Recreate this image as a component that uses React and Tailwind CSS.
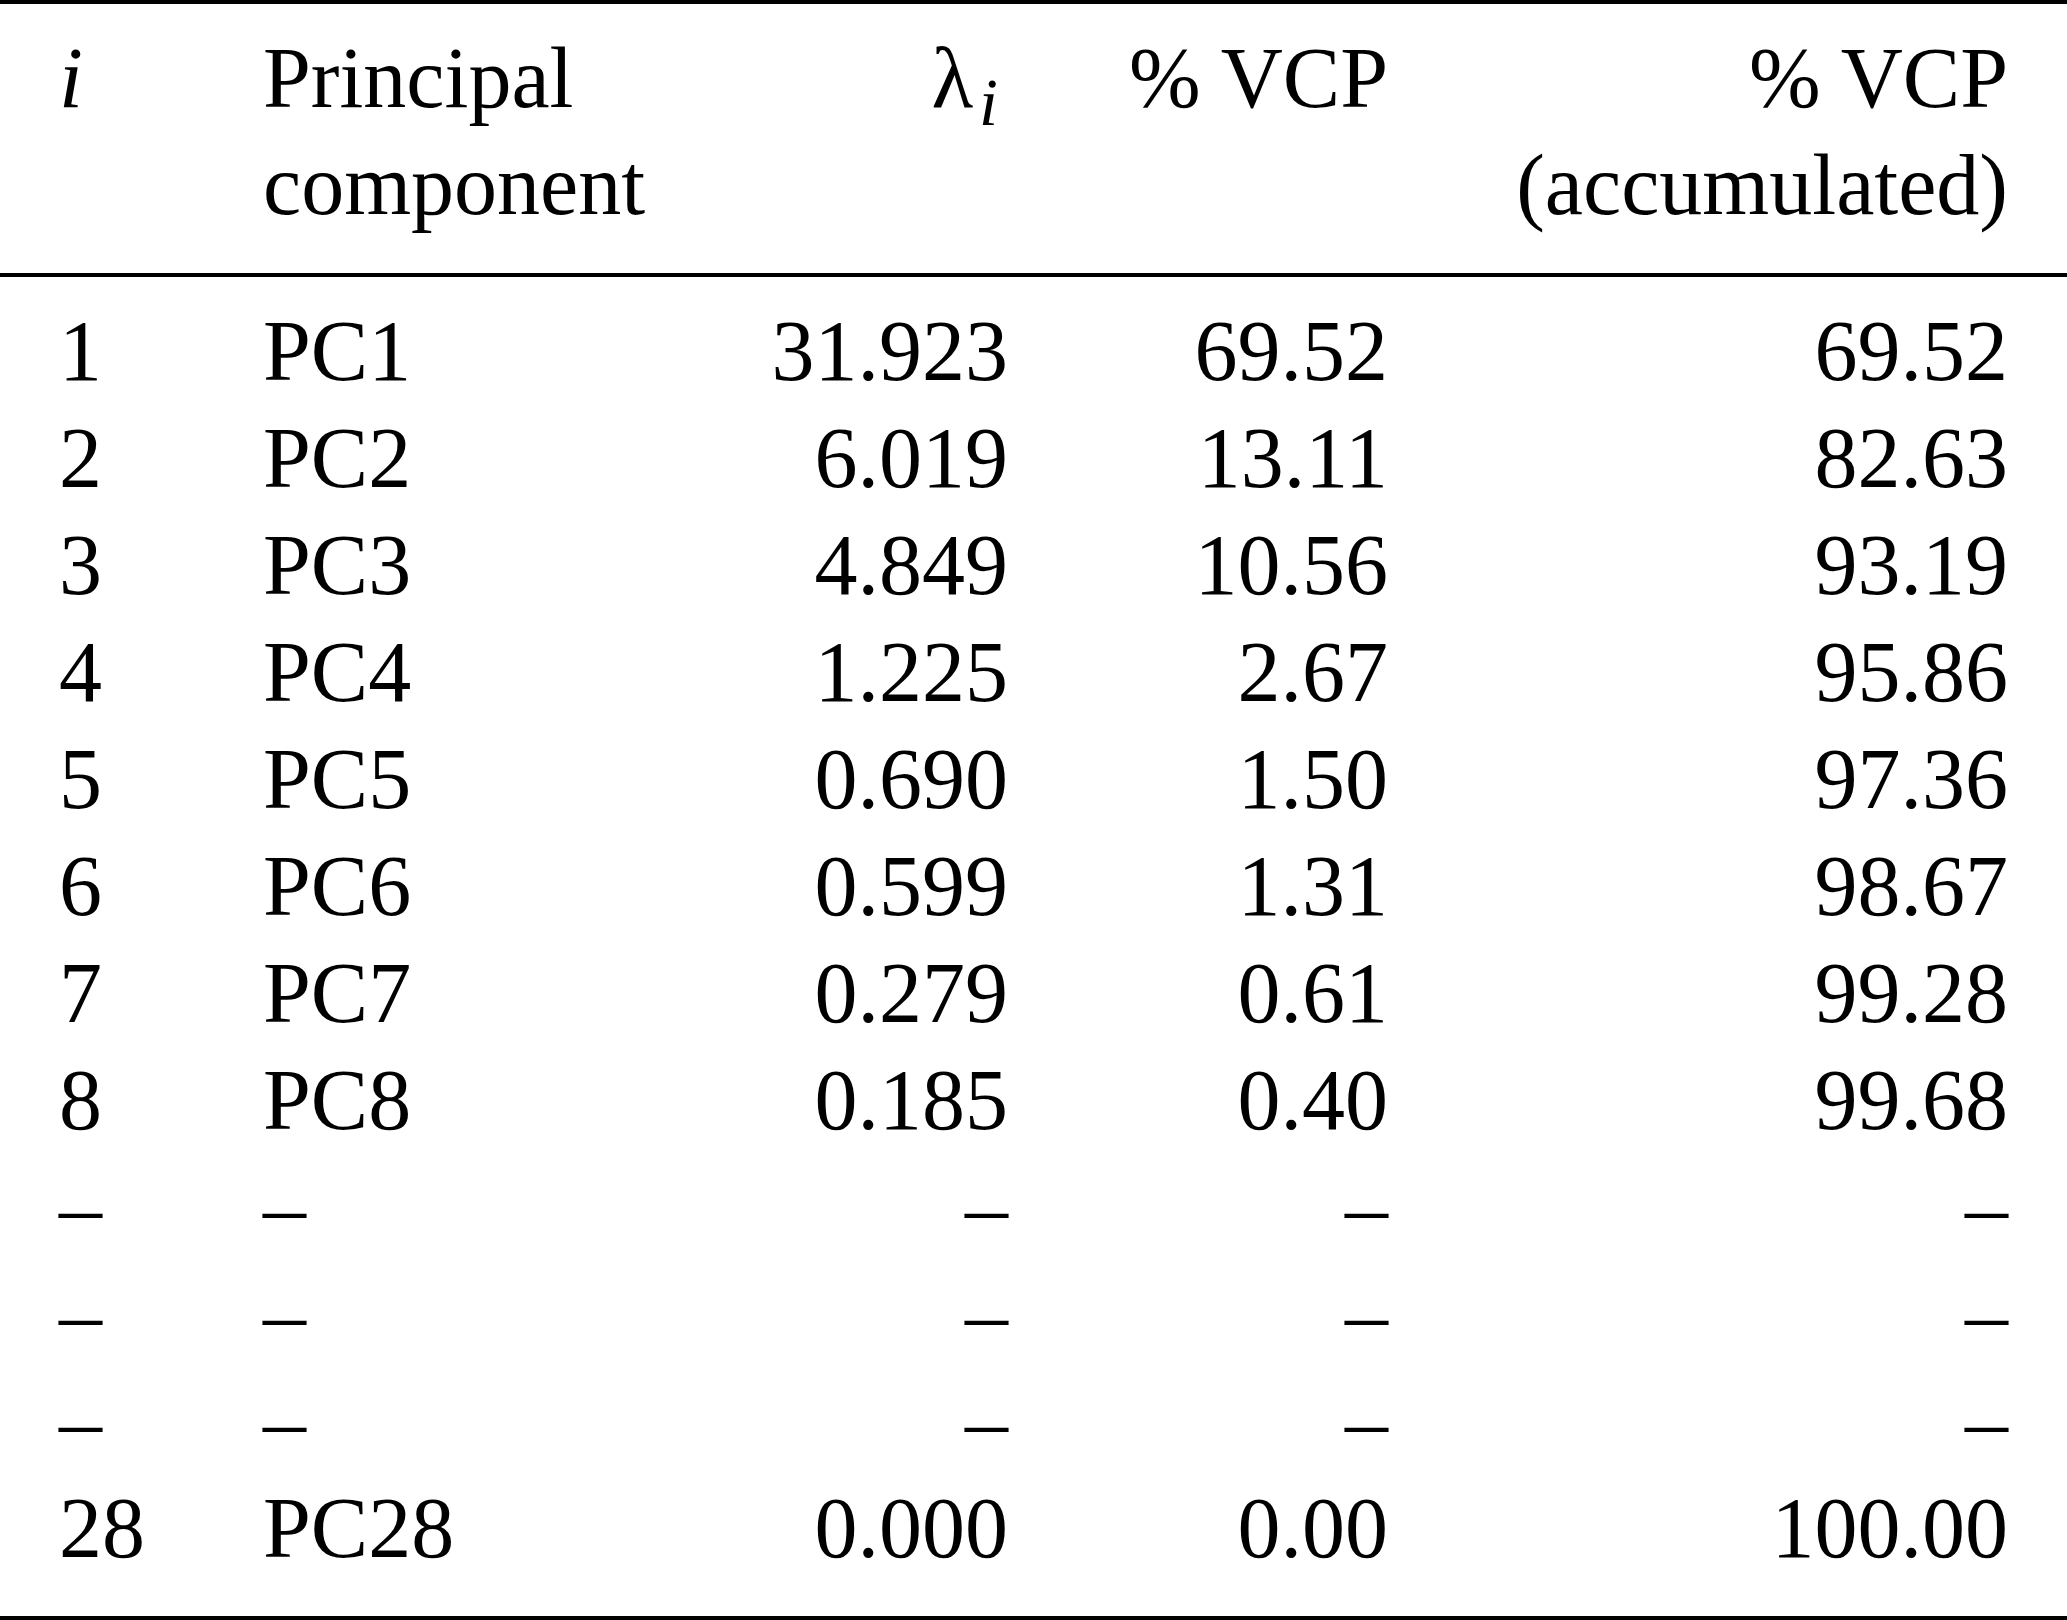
const rows = [
  ["1", "PC1", "31.923", "69.52", "69.52"],
  ["2", "PC2", "6.019", "13.11", "82.63"],
  ["3", "PC3", "4.849", "10.56", "93.19"],
  ["4", "PC4", "1.225", "2.67", "95.86"],
  ["5", "PC5", "0.690", "1.50", "97.36"],
  ["6", "PC6", "0.599", "1.31", "98.67"],
  ["7", "PC7", "0.279", "0.61", "99.28"],
  ["8", "PC8", "0.185", "0.40", "99.68"],
  ["–", "–", "–", "–", "–"],
  ["–", "–", "–", "–", "–"],
  ["–", "–", "–", "–", "–"],
  ["28", "PC28", "0.000", "0.00", "100.00"],
];

const cols = "grid grid-cols-[204px_350px_395px_380px_620px] pl-[59px] pr-[59px]";

export default function App() {
  return (
    <div className="w-[2067px] h-[1620px] bg-white text-black font-['Liberation_Serif','Times_New_Roman',serif] text-[86px] leading-[107px]">
      <div className="h-[4px] bg-black" />

      {/* header */}
      <div className={`${cols} pt-[20.5px] pb-[34.5px]`}>
        <div className="italic">i</div>
        <div>
          <div>Principal</div>
          <div>component</div>
        </div>
        <div className="text-right whitespace-nowrap">
          λ
          <span className="italic text-[68px] leading-[0] align-[-18px] ml-[6px] mr-[10px]">i</span>
        </div>
        <div className="text-right whitespace-nowrap">% VCP</div>
        <div className="text-right">
          <div>% VCP</div>
          <div>(accumulated)</div>
        </div>
      </div>

      <div className="h-[4px] bg-black" />

      {/* body */}
      <div className="pt-[20.5px] pb-[34.5px]">
        {rows.map((r, idx) => (
          <div key={idx} className={cols}>
            <div>{r[0]}</div>
            <div>{r[1]}</div>
            <div className="text-right">{r[2]}</div>
            <div className="text-right">{r[3]}</div>
            <div className="text-right">{r[4]}</div>
          </div>
        ))}
      </div>

      <div className="h-[4px] bg-black" />
    </div>
  );
}
